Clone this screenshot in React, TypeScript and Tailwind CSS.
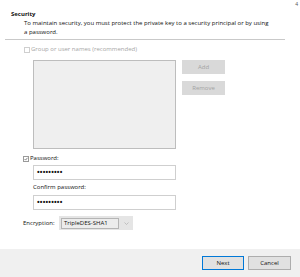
import React from "react";

const FONT = { fontFamily: '"Open Sans", "Noto Sans", sans-serif' };

function Box({ disabled, checked }: { disabled?: boolean; checked?: boolean }) {
  return (
    <span
      className={`inline-flex h-[6px] w-[6px] items-center justify-center border bg-white ${
        disabled ? "border-[#cfcfcf]" : "border-[#9a9a9a]"
      }`}
    >
      {checked && (
        <svg width="4" height="4" viewBox="0 0 4 4">
          <path d="M0.5 2 L1.6 3.1 L3.5 0.8" stroke="#555" strokeWidth="0.7" fill="none" />
        </svg>
      )}
    </span>
  );
}

function Field() {
  return (
    <div className="flex h-[15px] w-[143px] items-center border border-[#cfcfcf] bg-white pl-[3px]">
      <span className="text-[7px] font-bold leading-none tracking-[0.2px] text-[#111]">•••••••••</span>
    </div>
  );
}

export default function App() {
  return (
    <div
      className="relative flex h-[277px] w-[300px] flex-col overflow-hidden bg-white text-[6px] leading-[9px] text-[#111]"
      style={FONT}
    >
      <span className="absolute right-[2px] top-0 text-[5px] text-[#555]">4</span>

      <div className="pl-[11px] pt-[10px] font-bold">Security</div>
      <div className="w-[272px] pl-[24px]">
        To maintain security, you must protect the private key to a security principal or by using
        a password.
      </div>

      <div className="ml-[5px] mt-[2px] h-px w-[280px] bg-[#c9c9c9]" />

      {/* Groups */}
      <div className="mt-[5px] flex items-center gap-[1px] pl-[24px] text-[#a6a6a6]">
        <Box disabled />
        <span>Group or user names (recommended)</span>
      </div>

      <div className="mt-[6px] flex gap-[6px] pl-[33px]">
        <div className="h-[89px] w-[143px] border border-[#bdbdbd] bg-[#efefef]" />
        <div className="flex flex-col gap-[7px]">
          <div className="flex h-[14px] w-[43px] items-center justify-center bg-[#d9d9d9] text-[#a3a3a3]">
            Add
          </div>
          <div className="flex h-[14px] w-[43px] items-center justify-center bg-[#d9d9d9] text-[#a3a3a3]">
            Remove
          </div>
        </div>
      </div>

      {/* Password */}
      <div className="mt-[5px] flex items-center gap-[1px] pl-[23px]">
        <Box checked />
        <span>Password:</span>
      </div>
      <div className="mt-[2px] pl-[33px]">
        <Field />
      </div>
      <div className="mt-[3px] pl-[33px]">Confirm password:</div>
      <div className="mt-[3px] pl-[33px]">
        <Field />
      </div>

      {/* Encryption */}
      <div className="mt-[6px] flex items-center pl-[23px]">
        <span className="w-[36px]">Encryption:</span>
        <div className="flex h-[14px] w-[74px] items-center bg-[#e5e5e5] pl-[2px]">
          <div className="flex h-[11px] w-[58px] items-center border border-[#b5b5b5] bg-[#ececec] pl-[2px] leading-none">
            TripleDES-SHA1
          </div>
          <svg className="ml-[5px]" width="5" height="3" viewBox="0 0 5 3">
            <path d="M0.5 0.5 L2.5 2.5 L4.5 0.5" stroke="#b0b0b0" strokeWidth="0.7" fill="none" />
          </svg>
        </div>
      </div>

      {/* Footer */}
      <div className="mt-auto flex h-[28px] items-center justify-end gap-[4px] bg-[#f0f0f0] pr-[9px]">
        <div className="flex h-[14px] w-[42px] items-center justify-center border border-[#0078d7] bg-[#e1e1e1]">
          Next
        </div>
        <div className="flex h-[14px] w-[43px] items-center justify-center border border-[#adadad] bg-[#e1e1e1]">
          Cancel
        </div>
      </div>
    </div>
  );
}
